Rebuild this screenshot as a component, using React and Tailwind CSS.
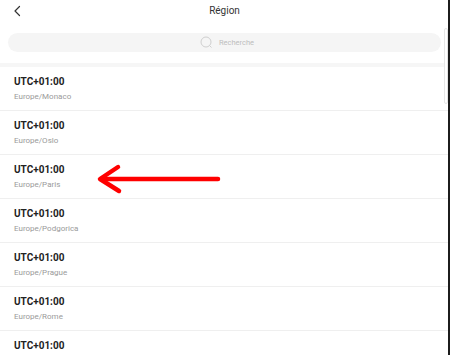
import React from "react";

const rows = [
  "Europe/Monaco",
  "Europe/Oslo",
  "Europe/Paris",
  "Europe/Podgorica",
  "Europe/Prague",
  "Europe/Rome",
  "Europe/San_Marino",
];

export default function App() {
  return (
    <div
      className="w-[450px] h-[355px] overflow-hidden bg-white flex relative"
      style={{ fontFamily: "Roboto, 'Noto Sans', Arial, sans-serif" }}
    >
      <div className="flex-1 flex flex-col min-w-0">
        {/* Header */}
        <div className="h-[22px] flex items-center relative shrink-0">
          <svg className="absolute left-[12px] top-[4px]" width="10" height="14" viewBox="0 0 10 14">
            <polyline points="7.5,2.5 3,7 7.5,11.5" fill="none" stroke="#333" strokeWidth="1.2" strokeLinecap="round" strokeLinejoin="round" />
          </svg>
          <div className="flex-1 text-center text-[10px] leading-[12px] text-[#333] pl-[1px]">Région</div>
        </div>
        {/* Search */}
        <div className="mt-[11px] ml-[8px] mr-[7px] h-[19px] rounded-full bg-[#f5f5f5] flex items-center justify-center gap-[6px] shrink-0">
          <svg width="13" height="13" viewBox="0 0 13 13" className="ml-[5px]">
            <circle cx="6" cy="6" r="5" fill="none" stroke="#cfcfcf" strokeWidth="1" />
            <line x1="9.6" y1="9.6" x2="11.5" y2="11.5" stroke="#cfcfcf" strokeWidth="1" />
          </svg>
          <span className="text-[7.5px] leading-[10px] text-[#bdbdbd]">Recherche</span>
        </div>
        <div className="h-[11px] shrink-0" />
        <div className="h-[4px] bg-[#f6f6f6] shrink-0" />
        {/* List */}
        <div className="flex flex-col">
          {rows.map((r) => (
            <div key={r} className="h-[44px] shrink-0 border-b border-[#efefef] pl-[14px] pt-[9px] flex flex-col">
              <div className="text-[10px] leading-[12px] font-bold text-[#222]">UTC+01:00</div>
              <div className="mt-[3px] text-[8px] leading-[12px] text-[#9a9a9a]">{r}</div>
            </div>
          ))}
        </div>
      </div>
      {/* right dark edge */}
      <div className="w-[2px] bg-[#1c1c1c] shrink-0" />
      {/* scrollbar track */}
      <div className="absolute right-[2px] top-[28px] w-[4px] h-[76px] border border-[#e6e6e6] rounded-[2px] bg-white" />
      {/* red arrow */}
      <svg className="absolute left-0 top-0 pointer-events-none" width="450" height="355" viewBox="0 0 450 355">
        <g fill="none" stroke="#ff0000" strokeWidth="4.5" strokeLinecap="round" strokeLinejoin="round">
          <line x1="218" y1="179" x2="101" y2="179" />
          <polyline points="118,167 100,179 119,191" />
        </g>
      </svg>
    </div>
  );
}
